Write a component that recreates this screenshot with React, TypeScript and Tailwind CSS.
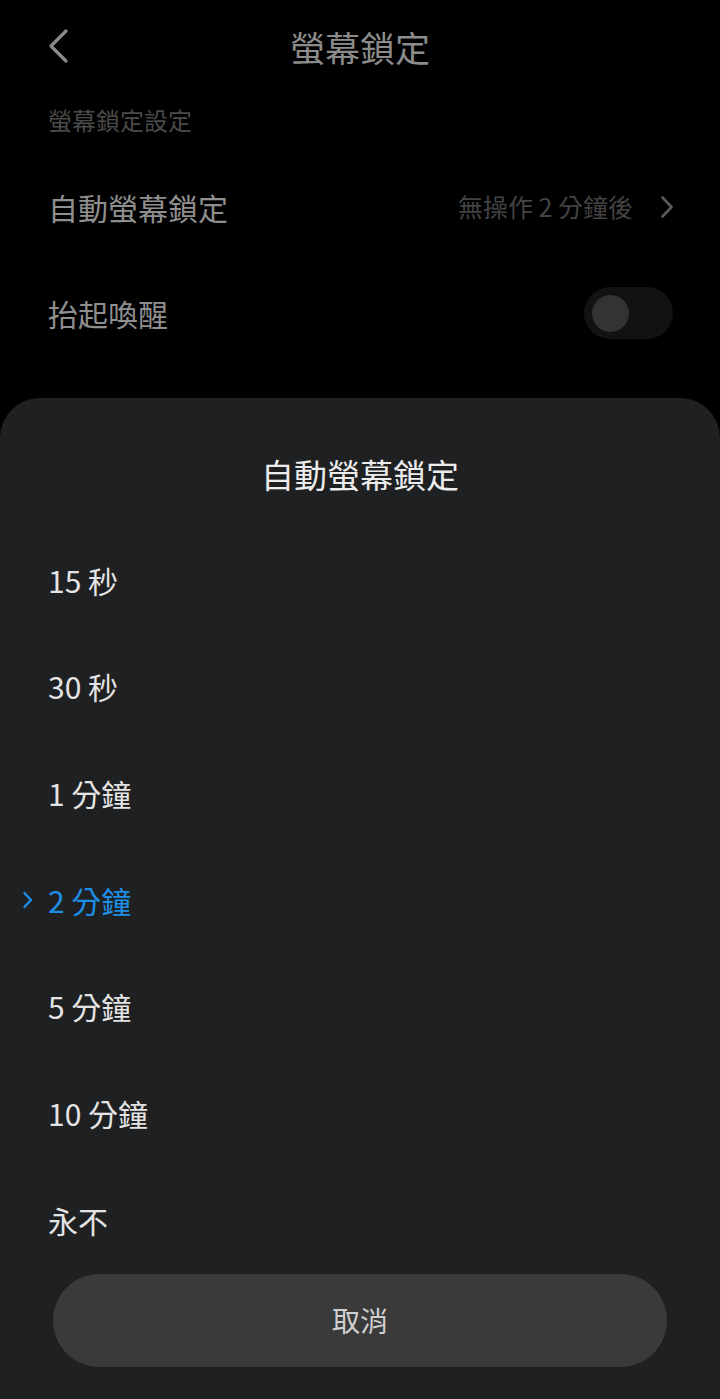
import React from "react";

const font = { fontFamily: '"Noto Sans CJK TC", "Noto Sans", sans-serif' };

const options = ["15 秒", "30 秒", "1 分鐘", "2 分鐘", "5 分鐘", "10 分鐘", "永不"];

export default function App() {
  return (
    <div className="w-[720px] h-[1399px] bg-black flex flex-col overflow-hidden" style={font}>
      {/* Header */}
      <div className="h-[92px] grid grid-cols-[1fr_auto_1fr] items-center">
        <div className="pl-[46px] flex items-center">
          <svg width="26" height="36" viewBox="0 0 26 36" fill="none">
            <path d="M20 3 L5 18 L20 33" stroke="#8a8a8a" strokeWidth="3.2" strokeLinecap="round" strokeLinejoin="round" />
          </svg>
        </div>
        <div className="text-[35px] leading-none text-[#8c8c8c]">螢幕鎖定</div>
        <div />
      </div>

      {/* Section label */}
      <div className="h-[56px] flex items-center px-[48px] text-[24px] text-[#4a4a4a]">螢幕鎖定設定</div>

      {/* Row 1 */}
      <div className="mt-[6px] h-[106px] flex items-center justify-between pl-[48px] pr-[46px]">
        <div className="text-[30px] text-[#8f8f8f]">自動螢幕鎖定</div>
        <div className="flex items-center gap-[27px]">
          <span className="text-[25px] text-[#434343]">無操作 2 分鐘後</span>
          <svg width="14" height="24" viewBox="0 0 14 24" fill="none">
            <path d="M2.5 2.5 L11.5 12 L2.5 21.5" stroke="#5a5a5a" strokeWidth="2.6" strokeLinecap="round" strokeLinejoin="round" />
          </svg>
        </div>
      </div>

      {/* Row 2 */}
      <div className="h-[106px] flex items-center justify-between pl-[48px] pr-[47px]">
        <div className="text-[30px] text-[#8f8f8f]">抬起喚醒</div>
        <div className="w-[89px] h-[52px] rounded-full bg-[#121212] flex items-center pl-[8px]">
          <div className="w-[37px] h-[37px] rounded-full bg-[#333333]" />
        </div>
      </div>

      {/* Bottom sheet */}
      <div className="mt-[32px] flex-1 bg-[#1f2022] rounded-t-[40px] flex flex-col">
        <div className="pt-[48px] mb-[25px] h-[104px] text-center text-[33px] leading-[56px] text-[#ececec]">
          自動螢幕鎖定
        </div>
        {options.map((o) => {
          const sel = o === "2 分鐘";
          return (
            <div key={o} className="h-[106.67px] flex items-center">
              <div className="w-[48px] h-full flex items-center pl-[22px]">
                {sel && (
                  <svg width="12" height="20" viewBox="0 0 12 20" fill="none">
                    <path d="M2.5 3 L9 10 L2.5 17" stroke="#1e8fe6" strokeWidth="2.4" strokeLinecap="round" strokeLinejoin="round" />
                  </svg>
                )}
              </div>
              <span className={"text-[30px] " + (sel ? "text-[#1e8fe6]" : "text-[#e4e4e4]")}>{o}</span>
            </div>
          );
        })}
        <div className="mx-[53px] h-[93px] rounded-full bg-[#3a3a3a] flex items-center justify-center text-[28px] text-[#cfcfcf]">
          取消
        </div>
      </div>
    </div>
  );
}
